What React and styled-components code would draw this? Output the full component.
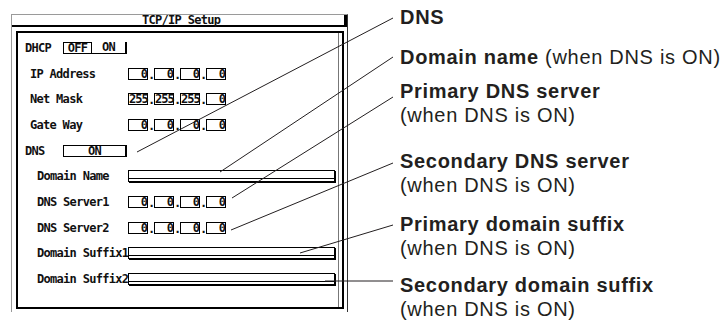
import React from "react";
import styled, { createGlobalStyle } from "styled-components";

const GlobalStyle = createGlobalStyle`
  html, body { margin: 0; padding: 0; background: #fff; }
  body { width: 721px; height: 320px; overflow: hidden; }
`;

const Figure = styled.div`
  position: relative;
  display: flex;
  width: 721px;
  height: 320px;
  overflow: hidden;
  background: #fff;
`;

const Screen = styled.div`
  margin: 14px 0 0 11px;
  width: 337px;
  height: 298px;
  flex: none;
  box-sizing: border-box;
  border-top: 1px solid #9a9a9a;
  border-left: 1px solid #9a9a9a;
  border-right: 1px solid #333;
  display: flex;
  flex-direction: column;
  font-family: "DejaVu Sans Mono", "Liberation Mono", monospace;
  font-size: 12px;
  letter-spacing: -0.7px;
  font-weight: bold;
  color: #111;
`;

const TitleBar = styled.div`
  display: flex;
  align-items: flex-end;
  height: 12px;
  box-sizing: border-box;
  padding-left: 130px;
  border-bottom: 2px solid #000;
  border-right: 3px solid #000;
`;

const Title = styled.span`
  line-height: 10px;
  white-space: pre;
`;

const Panel = styled.div`
  flex: 1;
  margin: 4px 3px 3px 4px;
  padding-top: 2px;
  border: 2px solid #000;
  box-shadow: inset -3px 0 0 #fff, inset -4px 0 0 #777;
  display: flex;
  flex-direction: column;
`;

const Row = styled.div`
  display: flex;
  align-items: center;
  height: 25.7px;
  flex: none;
  padding-left: ${(p) => p.$indent}px;
`;

const Label = styled.span`
  width: ${(p) => p.$w}px;
  flex: none;
  white-space: pre;
  line-height: 12px;
`;

const Toggle = styled.div`
  display: flex;
  width: 64px;
  height: 12px;
  box-sizing: border-box;
  border-left: 1px solid #000;
  border-bottom: 1px solid #000;
  border-right: 2px solid #000;
  border-top: ${(p) => (p.$boxed ? "1px solid #000" : "none")};
`;

const Segment = styled.span`
  flex: ${(p) => (p.$w ? "none" : 1)};
  width: ${(p) => (p.$w ? `${p.$w}px` : "auto")};
  box-sizing: border-box;
  text-align: center;
  line-height: 10px;
  border-top: ${(p) => (p.$active ? "1px solid #000" : "none")};
  border-right: ${(p) => (p.$active ? "1px solid #000" : "none")};
`;

const Address = styled.div`
  display: flex;
  align-items: flex-end;
`;

const Octet = styled.span`
  width: 20px;
  height: 12px;
  box-sizing: border-box;
  border: 1px solid #000;
  text-align: right;
  line-height: 10px;
  letter-spacing: -1px;
`;

const Dot = styled.span`
  width: 6px;
  text-align: center;
  line-height: 10px;
`;

const Field = styled.div`
  width: 207px;
  height: 12px;
  box-sizing: border-box;
  border: 1px solid #000;
  box-shadow: 1px 1px 0 #000, inset 0 -2px 0 #fff, inset 0 -3px 0 #000;
`;

const Callouts = styled.div`
  display: flex;
  flex-direction: column;
  margin-left: 52px;
  font-family: "Liberation Sans", Arial, sans-serif;
  font-size: 20px;
  letter-spacing: 0.7px;
  line-height: 24px;
  color: #231f20;
  white-space: nowrap;
`;

const Callout = styled.div`
  margin-top: ${(p) => p.$top}px;
  b { font-weight: bold; }
`;

const Leaders = styled.svg`
  position: absolute;
  left: 0;
  top: 0;
  pointer-events: none;
`;

const ipRows = [
  ["IP Address", ["0", "0", "0", "0"]],
  ["Net Mask", ["255", "255", "255", "0"]],
  ["Gate Way", ["0", "0", "0", "0"]],
];

const notes = [
  { top: 5, title: "DNS" },
  { top: 16, title: "Domain name", inline: " (when DNS is ON)" },
  { top: 10, title: "Primary DNS server", sub: "(when DNS is ON)" },
  { top: 22, title: "Secondary DNS server", sub: "(when DNS is ON)" },
  { top: 15, title: "Primary domain suffix", sub: "(when DNS is ON)" },
  { top: 13, title: "Secondary domain suffix", sub: "(when DNS is ON)" },
];

const lines = [
  [137, 152, 393, 18],
  [220, 172, 393, 57],
  [232, 198, 393, 97],
  [231, 230, 393, 163],
  [300, 253, 393, 225],
  [325, 281, 393, 281],
];

const IpField = ({ values }) => (
  <Address>
    {values.map((v, i) => (
      <React.Fragment key={i}>
        <Octet>{v}</Octet>
        {i < 3 && <Dot>.</Dot>}
      </React.Fragment>
    ))}
  </Address>
);

export default function App() {
  return (
    <Figure>
      <GlobalStyle />
      <Screen>
        <TitleBar>
          <Title>TCP/IP Setup</Title>
        </TitleBar>
        <Panel>
          <Row $indent={7}>
            <Label $w={38}>DHCP</Label>
            <Toggle>
              <Segment $w={28} $active>OFF</Segment>
              <Segment>ON</Segment>
            </Toggle>
          </Row>
          {ipRows.map(([name, values]) => (
            <Row key={name} $indent={12}>
              <Label $w={98}>{name}</Label>
              <IpField values={values} />
            </Row>
          ))}
          <Row $indent={7}>
            <Label $w={38}>DNS</Label>
            <Toggle $boxed>
              <Segment>ON</Segment>
            </Toggle>
          </Row>
          <Row $indent={19}>
            <Label $w={91}>Domain Name</Label>
            <Field />
          </Row>
          <Row $indent={19}>
            <Label $w={91}>DNS Server1</Label>
            <IpField values={["0", "0", "0", "0"]} />
          </Row>
          <Row $indent={19}>
            <Label $w={91}>DNS Server2</Label>
            <IpField values={["0", "0", "0", "0"]} />
          </Row>
          <Row $indent={19}>
            <Label $w={91}>Domain Suffix1</Label>
            <Field />
          </Row>
          <Row $indent={19}>
            <Label $w={91}>Domain Suffix2</Label>
            <Field />
          </Row>
        </Panel>
      </Screen>
      <Callouts>
        {notes.map((n) => (
          <Callout key={n.title} $top={n.top}>
            <b>{n.title}</b>
            {n.inline}
            {n.sub && <div>{n.sub}</div>}
          </Callout>
        ))}
      </Callouts>
      <Leaders width="721" height="320" viewBox="0 0 721 320">
        {lines.map(([x1, y1, x2, y2], i) => (
          <line key={i} x1={x1} y1={y1} x2={x2} y2={y2} stroke="#231f20" strokeWidth="1" />
        ))}
      </Leaders>
    </Figure>
  );
}
